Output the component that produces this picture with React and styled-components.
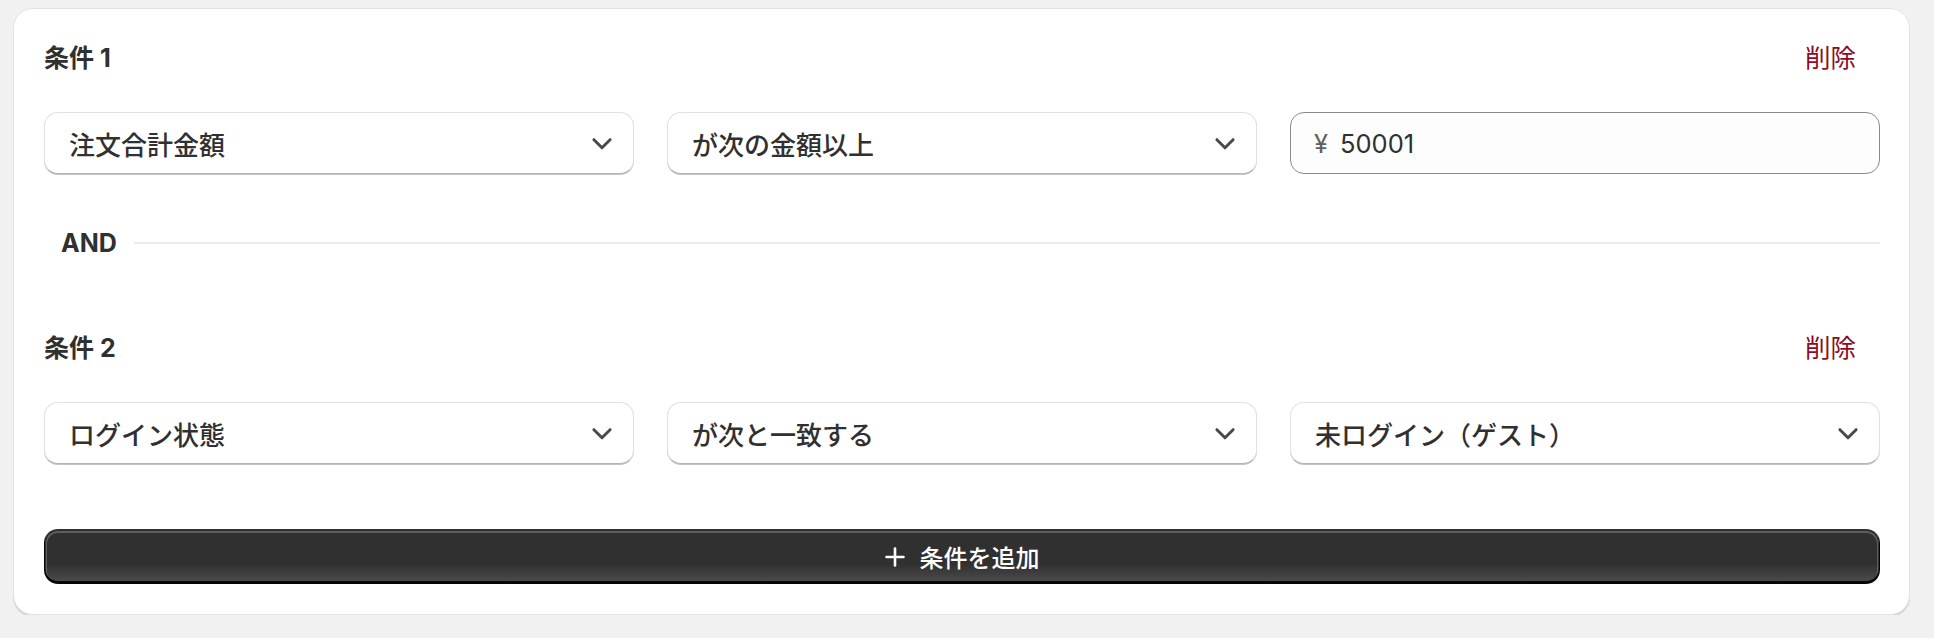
import React from 'react'
import styled, { createGlobalStyle } from 'styled-components'

const GlobalStyle = createGlobalStyle`
  body {
    margin: 0;
    background: #f1f1f1;
    font-family: Inter, "Noto Sans CJK JP", sans-serif;
    color: #303030;
  }
`

const Card = styled.section`
  margin: 8px 24px 0 13px;
  padding: 31px 29px 30px 30px;
  background: #fff;
  border: 1px solid #e3e3e3;
  border-radius: 20px;
  box-shadow: 0 2px 0 #d6d6d6;
`

const Header = styled.div`
  display: flex;
  align-items: center;
  justify-content: space-between;
  height: 36px;
`

const Title = styled.h3`
  margin: 0;
  font-size: 25px;
  font-weight: 650;
  line-height: 36px;
`

const DeleteButton = styled.button`
  border: 0;
  background: none;
  padding: 0 24px;
  font: inherit;
  font-size: 25.5px;
  line-height: 36px;
  color: #8e0b21;
  cursor: pointer;
`

const Fields = styled.div`
  display: grid;
  grid-template-columns: repeat(3, 1fr);
  gap: 33px;
  margin-top: 36px;
`

const SelectBox = styled.button`
  display: flex;
  align-items: center;
  justify-content: space-between;
  height: 62px;
  padding: 0 16px 0 24px;
  background: #fff;
  border: 1px solid #e1e1e1;
  border-bottom-color: #b5b5b5;
  border-radius: 14px;
  box-shadow: 0 1px 0 #c4c4c4;
  font: inherit;
  font-size: 26px;
  font-weight: 500;
  color: #303030;
  text-align: left;
  cursor: pointer;
`

const TextField = styled.label`
  display: flex;
  align-items: center;
  gap: 12px;
  height: 62px;
  padding: 0 24px 0 23px;
  box-sizing: border-box;
  background: #fdfdfd;
  border: 1px solid #8a8a8a;
  border-radius: 14px;
  font-size: 25.5px;
`

const Prefix = styled.span`
  color: #616161;
`

const Input = styled.input`
  flex: 1;
  min-width: 0;
  border: 0;
  outline: none;
  background: transparent;
  padding: 0;
  font: inherit;
  color: #303030;
`

const Divider = styled.div`
  display: flex;
  align-items: center;
  gap: 17px;
  height: 36px;
  margin: 51px 0 69px;
  padding-left: 17px;
  font-size: 25px;
  font-weight: 700;

  &::after {
    content: '';
    flex: 1;
    height: 2px;
    background: #ebebeb;
  }
`

const AddButton = styled.button`
  display: flex;
  align-items: center;
  justify-content: center;
  gap: 15px;
  width: 100%;
  height: 55px;
  margin-top: 65px;
  border: 0;
  border-radius: 14px;
  background: #303030
    linear-gradient(180deg, rgba(48, 48, 48, 0) 63%, rgba(255, 255, 255, 0.15) 100%);
  box-shadow:
    inset 0 -2px 0 1px rgba(0, 0, 0, 0.85),
    inset 0 0 0 2px #303030,
    inset 0 1px 0 3px rgba(255, 255, 255, 0.22);
  font: inherit;
  font-size: 24px;
  font-weight: 550;
  color: #fff;
  cursor: pointer;
`

const Chevron = () => (
  <svg width="30" height="30" viewBox="0 0 20 20" fill="none">
    <path d="M4.6 7.8 10 13.2l5.4-5.4" stroke="#4a4a4a" strokeWidth="2" strokeLinecap="round" strokeLinejoin="round" />
  </svg>
)

const Plus = () => (
  <svg width="20" height="20" viewBox="0 0 20 20" fill="none">
    <path d="M10 1.5v17M1.5 10h17" stroke="#fff" strokeWidth="2.6" strokeLinecap="round" />
  </svg>
)

function Select({ value }) {
  return (
    <SelectBox type="button">
      <span>{value}</span>
      <Chevron />
    </SelectBox>
  )
}

function Condition({ index, children }) {
  return (
    <div>
      <Header>
        <Title>条件 {index}</Title>
        <DeleteButton type="button">削除</DeleteButton>
      </Header>
      <Fields>{children}</Fields>
    </div>
  )
}

export default function App() {
  return (
    <>
      <GlobalStyle />
      <Card>
        <Condition index={1}>
          <Select value="注文合計金額" />
          <Select value="が次の金額以上" />
          <TextField>
            <Prefix>¥</Prefix>
            <Input defaultValue="50001" />
          </TextField>
        </Condition>
        <Divider>AND</Divider>
        <Condition index={2}>
          <Select value="ログイン状態" />
          <Select value="が次と一致する" />
          <Select value="未ログイン（ゲスト）" />
        </Condition>
        <AddButton type="button">
          <Plus />
          条件を追加
        </AddButton>
      </Card>
    </>
  )
}
